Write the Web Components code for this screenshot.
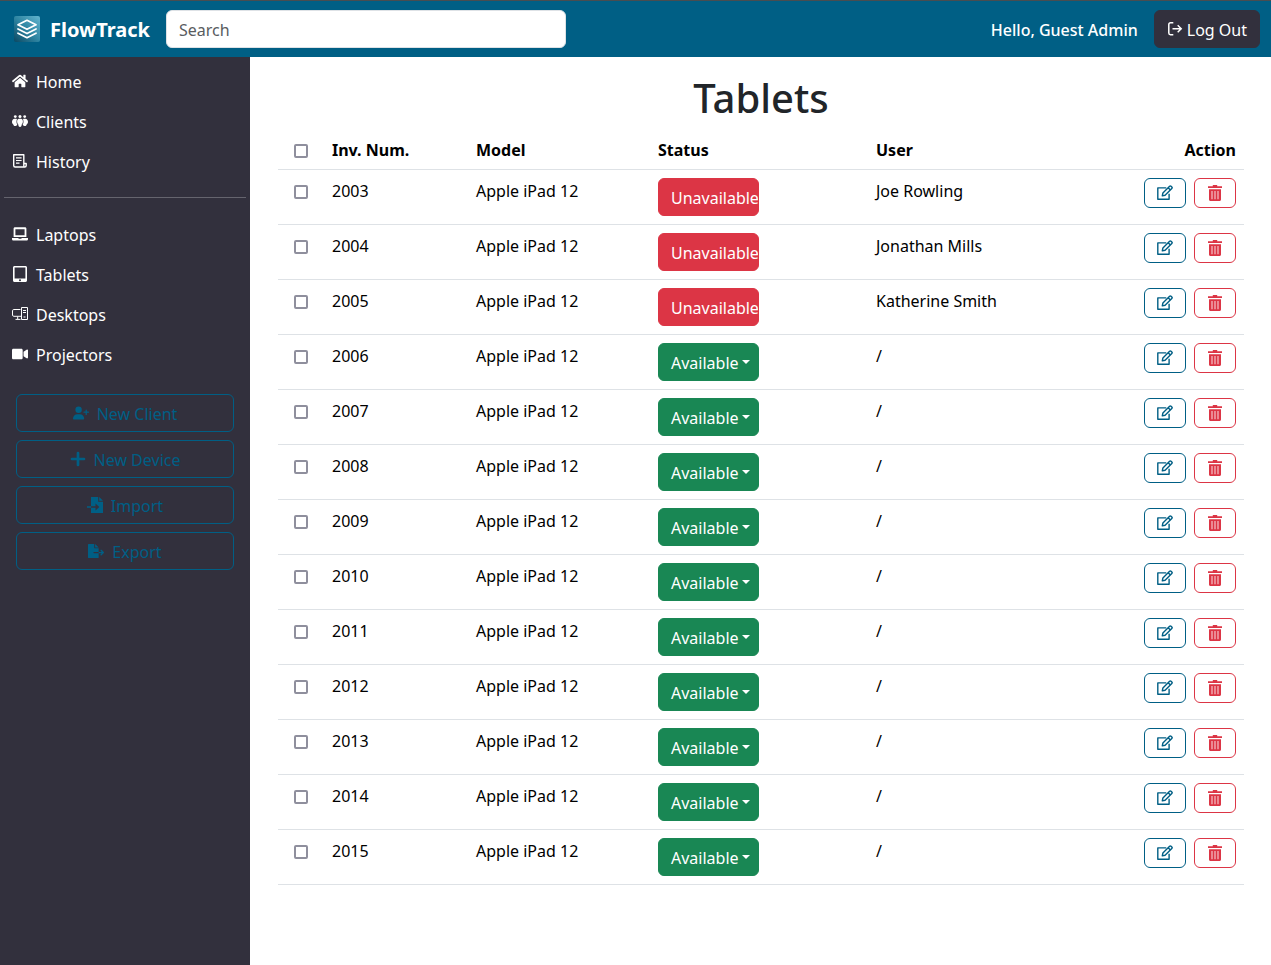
<!DOCTYPE html>
<html lang="en">
<head>
<meta charset="utf-8">
<meta name="viewport" content="width=device-width, initial-scale=1">
<title>FlowTrack - Tablets</title>
<style>
  :root {
    --brand: #005f85;
    --dark: #32303d;
    --danger: #dc3545;
    --success: #198754;
    --line: #dee2e6;
  }
  body {
    margin: 0;
    font: 400 16px/24px "Noto Sans", "Liberation Sans", sans-serif;
    color: #212529;
    background: #fff;
  }
</style>
</head>
<body>
<ft-app>
  <ft-header slot="header" user="Guest Admin"></ft-header>
  <ft-sidebar slot="sidebar">
    <ft-nav-link icon="home">Home</ft-nav-link>
    <ft-nav-link icon="clients">Clients</ft-nav-link>
    <ft-nav-link icon="history">History</ft-nav-link>
    <ft-nav-link slot="devices" icon="laptop">Laptops</ft-nav-link>
    <ft-nav-link slot="devices" icon="tablet">Tablets</ft-nav-link>
    <ft-nav-link slot="devices" icon="desktop">Desktops</ft-nav-link>
    <ft-nav-link slot="devices" icon="video">Projectors</ft-nav-link>
    <ft-side-button slot="actions" icon="user-plus">New Client</ft-side-button>
    <ft-side-button slot="actions" icon="plus">New Device</ft-side-button>
    <ft-side-button slot="actions" icon="import">Import</ft-side-button>
    <ft-side-button slot="actions" icon="export">Export</ft-side-button>
  </ft-sidebar>
  <ft-device-table heading="Tablets"></ft-device-table>
</ft-app>

<script>
const ICONS = {
  home: ['0 0 576 512', '<path d="M280.37 148.26L96 300.11V464a16 16 0 0 0 16 16l112.06-.29a16 16 0 0 0 15.92-16V368a16 16 0 0 1 16-16h64a16 16 0 0 1 16 16v95.64a16 16 0 0 0 16 16.05L464 480a16 16 0 0 0 16-16V300L295.67 148.26a12.19 12.19 0 0 0-15.3 0zM571.6 251.47L488 182.56V44.05a12 12 0 0 0-12-12h-56a12 12 0 0 0-12 12v72.61L318.47 43a48 48 0 0 0-61 0L4.34 251.47a12 12 0 0 0-1.6 16.9l25.5 31A12 12 0 0 0 45.15 301l235.22-193.74a12.19 12.19 0 0 1 15.3 0L530.9 301a12 12 0 0 0 16.9-1.6l25.5-31a12 12 0 0 0-1.7-16.93z"/>'],
  clients: ['0 0 16 16', '<circle cx="3.3" cy="3.6" r="1.4"/><circle cx="8" cy="3.4" r="1.5"/><circle cx="12.7" cy="3.6" r="1.4"/><path d="M2.6 5.700h1.700c.5 0 .7.3.6.7-.7 1.800-.5 3.600.4 5.100-.2.9-.9 1.400-1.600 1.400H2.800C2 12.900 1.500 12.300 1.300 11.400.3 10.600 0 9.700 0 8.700 0 7.200 1.100 5.700 2.600 5.700zM13.400 5.700h-1.700c-.5 0-.7.3-.6.7.7 1.800.5 3.600-.4 5.100.2.9.9 1.400 1.600 1.400h.9c.8 0 1.300-.6 1.500-1.500 1-.8 1.300-1.700 1.300-2.700 0-1.500-1.100-3-2.600-3z"/><path d="M7 5.700h2c1.200 0 1.900 1.200 1.900 2.800 0 1.100-.4 2.100-1.100 2.700-.1 1.500-.7 2.700-1.800 2.700s-1.700-1.200-1.800-2.700c-.7-.6-1.100-1.600-1.100-2.700 0-1.600.7-2.800 1.900-2.800z"/>'],
  history: ['0 0 16 16', '<path fill="none" stroke="currentColor" stroke-width="1.4" stroke-linejoin="round" d="M11.800 10.300V1.800H1.700v10.700c0 .9.600 1.500 1.400 1.500h9.700c.8 0 1.400-.6 1.400-1.500v-2H11.800v2.200c0 .7.400 1.200 1 1.200"/><path fill="none" stroke="currentColor" stroke-width="1.2" d="M4 4.800h5.600M4 7.500h5.600M4 10.200h3.500"/>'],
  laptop: ['0 0 16 16', '<path fill-rule="evenodd" d="M3 1.300h10c.8 0 1.400.6 1.400 1.400v8.300H1.600V2.700c0-.8.6-1.400 1.400-1.400zm.4 1.900v6h9.200v-6z"/><path d="M0 12h6.500v.7h3V12H16v.9c0 .9-.7 1.600-1.600 1.600H1.600C.7 14.500 0 13.800 0 12.900z"/>'],
  tablet: ['0 0 16 16', '<path fill-rule="evenodd" d="M2.500 0h11c.8 0 1.500.7 1.500 1.500v13c0 .8-.7 1.500-1.500 1.500h-11c-.8 0-1.500-.7-1.500-1.500v-13C1 .7 1.700 0 2.500 0zm.1 1.600v11h10.800v-11zM8 13.300a1 1 0 1 0 0 2 1 1 0 0 0 0-2z"/>'],
  desktop: ['0 0 16 16', '<path fill="none" stroke="currentColor" d="M8.500 3.500H1.800c-.8 0-1.300.5-1.300 1.300V9c0 .8.5 1.300 1.300 1.300H9M5.700 10.500v2.500M3.500 13.400h5"/><path fill="none" stroke="currentColor" d="M9.500 1.500h6v12h-6z"/><path fill="none" stroke="currentColor" d="M11 4.500h3M11 6.500h3M11.500 11h2"/>'],
  video: ['0 0 576 512', '<path d="M336.2 64H47.8C21.4 64 0 85.4 0 111.8v288.4C0 426.6 21.4 448 47.8 448h288.4c26.4 0 47.8-21.4 47.8-47.8V111.8c0-26.4-21.4-47.8-47.8-47.8zm189.4 37.7L416 177.3v157.4l109.6 75.500c21.2 14.6 50.4-.3 50.4-25.800V127.500c0-25.400-29.100-40.400-50.400-25.800z"/>'],
  'user-plus': ['0 0 640 512', '<path d="M96 128a128 128 0 1 1 256 0A128 128 0 1 1 96 128zM0 482.3C0 383.8 79.8 304 178.3 304h91.4C368.2 304 448 383.8 448 482.3c0 16.4-13.3 29.7-29.7 29.7H29.7C13.3 512 0 498.7 0 482.3zM504 312V248H440c-13.3 0-24-10.7-24-24s10.7-24 24-24h64V136c0-13.3 10.7-24 24-24s24 10.7 24 24v64h64c13.3 0 24 10.7 24 24s-10.7 24-24 24H552v64c0 13.3-10.7 24-24 24s-24-10.7-24-24z"/>'],
  plus: ['0 0 16 16', '<path d="M8 2v12M2 8h12" fill="none" stroke="currentColor" stroke-width="2.700" stroke-linecap="round"/>'],
  import: ['0 0 16 16', '<path d="M4 0h7.200v4.700H16V16H4v-5.200h4.500v2.700L12.300 10 8.500 6.500v2.700H4z"/><path d="M0 9.200h4v1.600H0zM12.200 0L16 3.800h-3.800z"/>'],
  export: ['0 0 576 512', '<path d="M0 24C0 10.700 10.700 0 24 0H224V128c0 17.700 14.300 32 32 32H384V288H216c-13.300 0-24 10.700-24 24s10.700 24 24 24H384V488c0 13.300-10.700 24-24 24H24c-13.300 0-24-10.700-24-24zM384 336V288H494.100l-39-39c-9.400-9.400-9.400-24.600 0-33.900s24.600-9.400 33.900 0l80 80c9.400 9.400 9.400 24.600 0 33.900l-80 80c-9.400 9.400-24.600 9.400-33.900 0s-9.400-24.600 0-33.900l39-39H384zm0-208H256V0L384 128z"/>'],
  logout: ['0 0 16 16', '<path fill="none" stroke="currentColor" stroke-width="1.5" d="M6.300 1.800H3.500c-1 0-1.700.7-1.700 1.700v8.600c0 1 .7 1.700 1.700 1.700h2.800M5.500 7.800h8.600M10.700 4.300l3.500 3.500-3.500 3.500"/>'],
  edit: ['0 0 16 16', '<path fill="none" stroke="currentColor" stroke-width="1.4" stroke-linejoin="round" d="M9.300 2.900H.8v11.300h11.300V8.800"/><path fill="none" stroke="currentColor" stroke-width="1.4" stroke-linejoin="round" d="M5.300 10.900l.6-2.900L12.600 1.300c.5-.5 1-.5 1.500 0l.7.7c.5.5.5 1 0 1.500L8.100 10.200zM11.200 2.700l2.200 2.200"/>'],
  trash: ['0 0 16 16', '<path fill-rule="evenodd" d="M5.800 0h4.400v1.200H15v1.900H1V1.200h4.800z"/><path d="M2 4.200h12v10.300c0 .9-.6 1.500-1.500 1.500h-9c-.9 0-1.500-.6-1.500-1.500z"/><path stroke="#fff" stroke-opacity=".6" stroke-width="1.4" d="M5 6v8.200M8 6v8.200M11 6v8.200"/>']
};

const define = (name, css, html, setup) => {
  const template = document.createElement('template');
  template.innerHTML = `<style>:host,*{box-sizing:border-box}${css}</style>${html}`;
  customElements.define(name, class extends HTMLElement {
    constructor() {
      super();
      this.attachShadow({ mode: 'open' }).append(template.content.cloneNode(true));
    }
    connectedCallback() { if (setup) setup(this, this.shadowRoot); }
  });
};

// Puts the icon named by the host's "icon" attribute first in its control.
const addIcon = (host, root) => {
  const icon = document.createElement('ft-icon');
  icon.setAttribute('name', host.getAttribute('icon'));
  root.querySelector('a, button').prepend(icon);
};

define('ft-icon', `
  :host { display: block; width: 16px; height: 16px; flex: none; }
  svg { display: block; width: 100%; height: 100%; }
`, '<svg aria-hidden="true" fill="currentColor"></svg>', (host, root) => {
  const [box, body] = ICONS[host.getAttribute('name')];
  const svg = root.querySelector('svg');
  svg.setAttribute('viewBox', box);
  svg.innerHTML = body;
});

define('ft-app', `
  :host { display: flex; flex-direction: column; min-height: 100vh; }
  .body { flex: 1; display: flex; }
  main { flex: 1; min-width: 0; padding: 16px 27px 16px 28px; }
`, `<slot name="header"></slot>
  <div class="body"><slot name="sidebar"></slot><main><slot></slot></main></div>`);

define('ft-header', `
  :host { display: block; background: var(--brand); color: #fff; border-top: 1px solid #494d50; }
  header { display: flex; align-items: center; gap: 16px; padding: 9px 11px 9px 14px; }
  .brand { display: flex; align-items: center; gap: 10px; color: #fff; font-size: 20px; font-weight: 700; text-decoration: none; }
  .logo { display: block; width: 26px; height: 26px; }
  .text { padding-top: 2px; }
  form { flex: 0 1 400px; }
  input { display: block; width: 100%; height: 38px; padding: 7px 12px 5px; border: 1px solid #dee2e6; border-radius: 6px; background: #fff; color: #212529; font: inherit; }
  input::placeholder { color: #595c5f; opacity: 1; }
  .hello { margin-left: auto; font-weight: 500; }
  button { display: flex; align-items: center; gap: 4px; height: 38px; padding: 5px 12px; border: 1px solid var(--dark); border-radius: 6px; background: var(--dark); color: #fff; font: inherit; }
`, `<header>
    <a class="brand" href="#">
      <svg class="logo" viewBox="0 0 26 26" aria-hidden="true">
        <defs><linearGradient id="g" x1="1" y1="0" x2="0" y2="1">
          <stop offset="0" stop-color="#62b5cf"/><stop offset=".5" stop-color="#2f86a3"/><stop offset="1" stop-color="#0b4862"/>
        </linearGradient></defs>
        <rect width="26" height="26" rx="2" fill="url(#g)"/>
        <g fill="none" stroke="#fff" stroke-width="1.8" stroke-linejoin="round" stroke-linecap="round">
          <path d="M13 4.300l9 4.500-9 4.500-9-4.500z"/><path d="M4 13l9 4.500 9-4.500M4 17.200l9 4.500 9-4.500"/>
        </g>
      </svg>
      <span class="text">FlowTrack</span>
    </a>
    <form role="search"><input type="search" placeholder="Search" aria-label="Search"></form>
    <span class="hello text"></span>
    <button type="button"><ft-icon name="logout"></ft-icon><span class="text">Log Out</span></button>
  </header>`, (host, root) => {
  root.querySelector('.hello').textContent = `Hello, ${host.getAttribute('user')}`;
});

define('ft-sidebar', `
  :host { display: block; flex: 0 0 250px; background: var(--dark); color: #fff; padding: 4px; }
  hr { margin: 16px 0; border: 0; border-top: 1px solid #65646e; }
  .actions { display: flex; flex-direction: column; gap: 8px; padding: 20px 12px; }
`, `<nav aria-label="Main"><slot></slot><hr><slot name="devices"></slot></nav>
  <div class="actions"><slot name="actions"></slot></div>`);

define('ft-nav-link', `
  :host { display: block; }
  a { display: flex; align-items: center; gap: 8px; padding: 7px 8px; color: #fff; text-decoration: none; }
  .text { padding-top: 2px; }
`, '<a href="#"><span class="text"><slot></slot></span></a>', addIcon);

define('ft-side-button', `
  :host { display: block; }
  button { display: flex; align-items: center; justify-content: center; gap: 8px; width: 100%; height: 38px; border: 1px solid var(--brand); border-radius: 6px; background: none; color: var(--brand); font: inherit; }
  .text { padding-top: 2px; }
`, '<button type="button"><span class="text"><slot></slot></span></button>', addIcon);

define('ft-status', `
  :host { display: block; }
  button { display: flex; align-items: center; width: 101px; height: 38px; padding: 7px 12px 5px; border: 1px solid var(--danger); border-radius: 6px; background: var(--danger); color: #fff; font: inherit; white-space: nowrap; overflow: hidden; }
  :host([available]) button { background: var(--success); border-color: var(--success); }
  :host([available]) button::after { content: ""; margin: 0 0 2px 3px; border: 4px solid transparent; border-top-color: #fff; border-bottom: 0; }
`, '<button type="button"><slot></slot></button>');

define('ft-icon-button', `
  :host { display: block; color: var(--brand); }
  :host([danger]) { color: var(--danger); }
  button { display: flex; align-items: center; justify-content: center; width: 42px; height: 30px; padding: 0; border: 1px solid currentColor; border-radius: 6px; background: none; color: inherit; }
`, '<button type="button"></button>', (host, root) => {
  addIcon(host, root);
  root.querySelector('button').setAttribute('aria-label', host.getAttribute('label'));
});

const holders = { 2003: 'Joe Rowling', 2004: 'Jonathan Mills', 2005: 'Katherine Smith' };
const devices = Array.from({ length: 13 }, (_, i) => ({ number: 2003 + i, model: 'Apple iPad 12', user: holders[2003 + i] }));

define('ft-device-table', `
  :host { display: block; }
  h1 { margin: 0; padding: 1px 0 7px; font-size: 40px; line-height: 48px; font-weight: 500; text-align: center; }
  table { width: 100%; table-layout: fixed; border-collapse: separate; border-spacing: 0; color: #000; }
  th, td { padding: 9px 8px 7px; border-bottom: 1px solid var(--line); text-align: left; vertical-align: top; }
  th { font-weight: 700; }
  td.control { padding: 8px; }
  .check { width: 46px; }
  .number { width: 144px; }
  .model { width: 182px; }
  .status { width: 218px; }
  th.action { text-align: right; }
  label { display: flex; align-items: center; justify-content: center; height: 24px; padding-top: 2px; }
  input { appearance: none; width: 14px; height: 14px; margin: 0; border: 2px solid #8f8f9d; border-radius: 2px; background: #fff; }
  .buttons { display: flex; justify-content: flex-end; gap: 8px; }
`, `<h1></h1>
  <table>
    <thead><tr>
      <th class="check"><label><input type="checkbox" aria-label="Select all"></label></th>
      <th class="number">Inv. Num.</th><th class="model">Model</th><th class="status">Status</th>
      <th>User</th><th class="action">Action</th>
    </tr></thead>
    <tbody></tbody>
  </table>`, (host, root) => {
  root.querySelector('h1').textContent = host.getAttribute('heading');
  root.querySelector('tbody').innerHTML = devices.map(d => `<tr>
    <td><label><input type="checkbox" aria-label="Select ${d.number}"></label></td>
    <td>${d.number}</td><td>${d.model}</td>
    <td class="control">${d.user ? '<ft-status>Unavailable</ft-status>' : '<ft-status available>Available</ft-status>'}</td>
    <td>${d.user || '/'}</td>
    <td class="control"><div class="buttons"><ft-icon-button icon="edit" label="Edit ${d.number}"></ft-icon-button><ft-icon-button danger icon="trash" label="Delete ${d.number}"></ft-icon-button></div></td>
  </tr>`).join('');
});
</script>
</body>
</html>
